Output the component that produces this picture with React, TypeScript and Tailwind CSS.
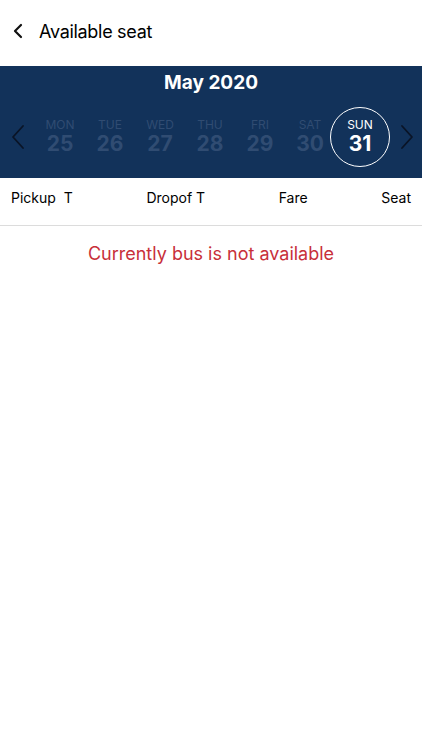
const days = [
  { d: "MON", n: 25 },
  { d: "TUE", n: 26 },
  { d: "WED", n: 27 },
  { d: "THU", n: 28 },
  { d: "FRI", n: 29 },
  { d: "SAT", n: 30 },
  { d: "SUN", n: 31, active: true },
];

export default function App() {
  return (
    <div className="flex h-[750px] w-[422px] flex-col bg-white font-['Inter',sans-serif] text-black">
      {/* Header */}
      <div className="flex h-[66px] items-center pb-[4px] pl-[12px]">
        <svg width="14" height="16" viewBox="0 0 14 16" className="mr-[13px]">
          <path d="M9 2 L3 8 L9 14" fill="none" stroke="#111" strokeWidth="2.2" strokeLinecap="round" strokeLinejoin="round" />
        </svg>
        <span className="text-[18px] tracking-[-0.3px]">Available seat</span>
      </div>

      {/* Calendar strip */}
      <div className="flex h-[112px] flex-col bg-[#12325a]">
        <div className="pt-[5px] text-center text-[19px] font-bold leading-[24px] text-white">May 2020</div>
        <div className="flex flex-1 items-center">
          <div className="flex w-[35px] justify-center">
            <svg width="14" height="26" viewBox="0 0 14 26">
              <path d="M12 2 L2 13 L12 24" fill="none" stroke="#0a1426" strokeWidth="1.8" strokeLinecap="round" strokeLinejoin="round" />
            </svg>
          </div>
          <div className="flex flex-1 items-center">
            {days.map((x) =>
              x.active ? (
                <div key={x.n} className="flex w-[50px] shrink-0 justify-center">
                  <div className="-mx-[6px] flex h-[60px] w-[60px] shrink-0 flex-col items-center justify-center rounded-full border border-white text-white">
                    <span className="text-[12px] leading-[14px]">{x.d}</span>
                    <span className="text-[21px] font-bold leading-[24px]">{x.n}</span>
                  </div>
                </div>
              ) : (
                <div key={x.n} className="flex w-[50px] shrink-0 flex-col items-center text-[#304c72]">
                  <span className="text-[12px] leading-[14px]">{x.d}</span>
                  <span className="text-[21px] font-bold leading-[24px]">{x.n}</span>
                </div>
              )
            )}
          </div>
          <div className="flex w-[30px] justify-center">
            <svg width="14" height="26" viewBox="0 0 14 26">
              <path d="M2 2 L12 13 L2 24" fill="none" stroke="#0a1426" strokeWidth="1.8" strokeLinecap="round" strokeLinejoin="round" />
            </svg>
          </div>
        </div>
      </div>

      {/* Column headers */}
      <div className="flex h-[48px] items-center justify-between border-b border-[#dcdcdc] px-[11px] pb-[8px] text-[14px]">
        <span className="whitespace-pre">Pickup  T</span>
        <span>Dropof T</span>
        <span>Fare</span>
        <span>Seat</span>
      </div>

      <div className="pt-[14px] text-center text-[18px] text-[#c8303a]">Currently bus is not available</div>
    </div>
  );
}
